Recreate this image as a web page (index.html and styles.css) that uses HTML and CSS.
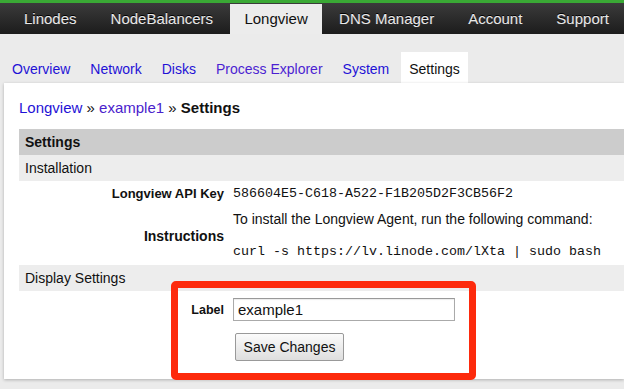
FILE: index.html
```html
<!DOCTYPE html>
<html>
<head>
<meta charset="utf-8">
<link rel="stylesheet" href="styles.css">
</head>
<body>
<div class="topbar">
  <nav class="mainnav">
    <a class="mainnav-item">Linodes</a>
    <a class="mainnav-item">NodeBalancers</a>
    <a class="mainnav-item is-active">Longview</a>
    <a class="mainnav-item">DNS Manager</a>
    <a class="mainnav-item">Account</a>
    <a class="mainnav-item">Support</a>
  </nav>
</div>
<div class="subnav">
  <a class="subnav-item">Overview</a>
  <a class="subnav-item">Network</a>
  <a class="subnav-item">Disks</a>
  <a class="subnav-item visited">Process Explorer</a>
  <a class="subnav-item">System</a>
  <a class="subnav-item is-active">Settings</a>
</div>
<main class="panel">
  <div class="crumbs"><a class="link">Longview</a> » <a class="link visited">example1</a> » <b>Settings</b></div>
  <div class="table">
    <div class="row head">Settings</div>
    <div class="row section">Installation</div>
    <div class="row pair bordered apikey-row">
      <div class="key key-sm">Longview API Key</div>
      <div class="val mono">586604E5-C618-A522-F1B205D2F3CB56F2</div>
    </div>
    <div class="row pair">
      <div class="key">Instructions</div>
      <div class="val instr">
        <div class="instr-text">To install the Longview Agent, run the following command:</div>
        <div class="mono instr-cmd">curl -s https://lv.linode.com/lXta | sudo bash</div>
      </div>
    </div>
    <div class="row section">Display Settings</div>
    <div class="row pair bordered form-row">
      <div class="key key-xs">Label</div>
      <div class="val"><input class="input" type="text" value="example1"></div>
    </div>
    <div class="row pair btn-row">
      <div class="key"></div>
      <div class="val"><button class="btn">Save Changes</button></div>
    </div>
  </div>
  <div class="highlight"></div>
</main>
</body>
</html>
```
FILE: styles.css
```css
html, body {
  margin: 0;
  padding: 0;
  overflow: hidden;
}
body {
  background: #ebebeb;
  font-family: "Liberation Sans", Arial, sans-serif;
  color: #111;
  width: 624px;
  height: 389px;
}
.topbar {
  border-top: 3px solid #3aa935;
  height: 31px;
  background: linear-gradient(#3b3b3b, #1c1c1c);
}
.mainnav {
  display: flex;
  padding-left: 7px;
  height: 31px;
}
.mainnav-item {
  padding: 1px 17px 0 17px;
  font-size: 15px;
  line-height: 30px;
  color: #e8e8e8;
  text-shadow: 0 -1px 0 #000, 0 0 1px rgba(255,255,255,0.3);
  white-space: nowrap;
}
.mainnav-item.is-active {
  background: #ececec;
  color: #111;
  text-shadow: none;
  margin-top: 1px;
  padding: 0 16px;
  line-height: 30px;
  width: 60px;
  justify-content: center;
  display: flex;
}
.subnav {
  height: 49px;
  background: #ebebeb;
  display: flex;
  align-items: flex-end;
  padding-left: 4px;
  gap: 4px;
}
.subnav-item {
  font-size: 14px;
  line-height: 28px;
  padding: 3px 8px 0 8px;
  color: #1f12d6;
  white-space: nowrap;
}
.subnav-item.visited { color: #4c1fd2; }
.subnav-item.is-active {
  background: #fff;
  color: #111;
}
.panel {
  position: relative;
  background: #fff;
  margin-left: 4px;
  padding: 16px 0 12px 15px;
  box-shadow: 0 1px 3px rgba(0,0,0,0.25);
}
.crumbs {
  font-size: 15px;
  line-height: 18px;
  margin-bottom: 12px;
}
.link { color: #1f12d6; }
.link.visited { color: #4a22cc; }
.table {
  font-size: 14px;
}
.row {
  display: flex;
  align-items: center;
}
.head {
  background: #cccccc;
  height: 26px;
  padding-left: 6px;
  font-weight: bold;
}
.section {
  background: #ededed;
  height: 26px;
  padding-left: 6px;
}
.apikey-row { height: 25px; }
.key {
  width: 205px;
  flex: none;
  text-align: right;
  font-weight: bold;
  padding-right: 4px;
}
.key-sm { font-size: 13px; }
.key-xs { font-size: 12.5px; }
.val {
  padding-left: 5px;
}
.mono {
  font-family: "Liberation Mono", "Courier New", monospace;
  font-size: 13.33px;
}
.instr {
  padding-top: 5px;
  padding-bottom: 5px;
}
.instr-text {
  line-height: 17px;
  margin-bottom: 16px;
}
.instr-cmd {
  line-height: 16px;
}
.form-row {
  padding: 7px 0 6px 0;
}
.input {
  box-sizing: border-box;
  width: 222px;
  height: 23px;
  border: 1px solid #aaa;
  border-top-color: #999;
  padding: 0 4px;
  font-family: "Liberation Sans", Arial, sans-serif;
  font-size: 15px;
  color: #111;
  margin: 0;
  box-shadow: inset 0 1px 1px rgba(0,0,0,0.08);
}
.btn-row {
  padding: 6px 0;
}
.btn {
  box-sizing: border-box;
  width: 109px;
  height: 28px;
  margin-left: 2px;
  border: 1px solid #999;
  border-radius: 2px;
  background: linear-gradient(#fbfbfb, #dedede);
  font-family: "Liberation Sans", Arial, sans-serif;
  font-size: 14px;
  color: #111;
  padding: 0;
}
.highlight {
  position: absolute;
  left: 167px;
  top: 198px;
  width: 305px;
  height: 99px;
  box-sizing: border-box;
  border: 7px solid #fd2a0c;
  border-radius: 5px;
}
```
